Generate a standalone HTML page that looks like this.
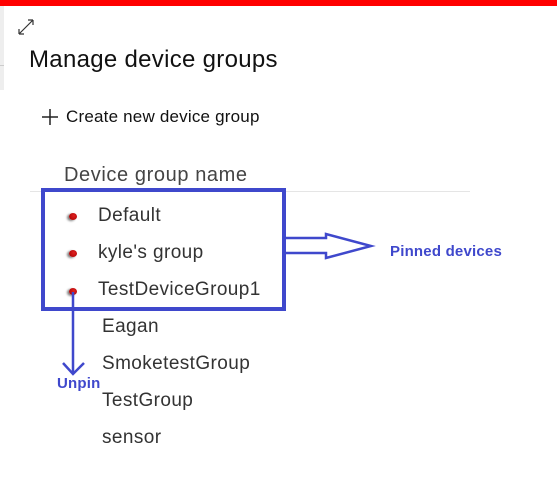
<!DOCTYPE html>
<html><head><style>
body{margin:0;width:557px;height:491px;background:#fff;position:relative;overflow:hidden;font-family:"Liberation Sans",Arial,sans-serif;}
.t{position:absolute;white-space:nowrap;color:#333;font-size:19px;letter-spacing:0.4px;}
.dot{position:absolute;width:8px;height:7px;border-radius:50%;background:radial-gradient(circle at 60% 40%,#e02020,#a00000);box-shadow:-2px 1px 2px rgba(0,0,0,.5);}
</style></head><body>
<div style="position:absolute;left:0;top:0;width:557px;height:6px;background:#f00"></div>
<div style="position:absolute;left:0;top:6px;width:4px;height:84px;background:#eee"></div>
<div style="position:absolute;left:0;top:65px;width:4px;height:1px;background:#ccc"></div>
<svg style="position:absolute;left:17px;top:18px" width="18" height="18"><path d="M2 16L16 2M2 16v-5M2 16h5M16 2h-5M16 2v5" stroke="#333" stroke-width="1.2" fill="none"/></svg>
<div class="t" style="left:29px;top:46px;font-size:24px;letter-spacing:0.3px;color:#111">Manage device groups</div>
<svg style="position:absolute;left:41px;top:108px" width="18" height="18"><path d="M9 1v16M1 9h16" stroke="#222" stroke-width="1.5"/></svg>
<div class="t" style="left:66px;top:107px;font-size:17px;letter-spacing:0.2px;color:#111">Create new device group</div>
<div class="t" style="left:64px;top:164px;font-size:20px;letter-spacing:0.6px;color:#444">Device group name</div>
<div style="position:absolute;left:30px;top:191px;width:440px;height:1px;background:#e5e5e5"></div>
<div class="dot" style="left:69px;top:213px"></div>
<div class="dot" style="left:69px;top:250px"></div>
<div class="dot" style="left:69px;top:288px"></div>
<div class="t" style="left:98px;top:205px">Default</div>
<div class="t" style="left:98px;top:242px">kyle's group</div>
<div class="t" style="left:98px;top:279px">TestDeviceGroup1</div>
<div class="t" style="left:102px;top:316px">Eagan</div>
<div class="t" style="left:102px;top:353px">SmoketestGroup</div>
<div class="t" style="left:102px;top:390px">TestGroup</div>
<div class="t" style="left:102px;top:427px">sensor</div>
<svg style="position:absolute;left:0;top:0" width="557" height="491">
<rect x="43" y="190" width="241" height="119" fill="none" stroke="#3f48cc" stroke-width="4"/>
<path d="M286 238H326V234L371 246L326 258V253H286" fill="none" stroke="#3f48cc" stroke-width="2.5"/>
<path d="M73 292V374M63 363L73 374L84 363" fill="none" stroke="#3f48cc" stroke-width="2.5"/>
</svg>
<div class="t" style="left:390px;top:243px;font-size:15px;letter-spacing:0.2px;font-weight:bold;color:#3f48cc">Pinned devices</div>
<div class="t" style="left:57px;top:375px;font-size:15px;letter-spacing:0.2px;font-weight:bold;color:#3f48cc">Unpin</div>
</body></html>
